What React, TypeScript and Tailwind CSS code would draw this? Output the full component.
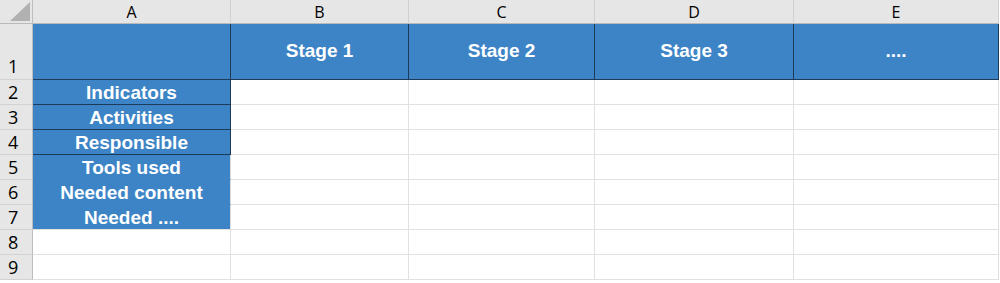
import React from 'react';

const columns = ['A', 'B', 'C', 'D', 'E'];
const stages = ['Stage 1', 'Stage 2', 'Stage 3', '....'];
const labels = ['Indicators', 'Activities', 'Responsible', 'Tools used', 'Needed content', 'Needed ....'];

const headFont = { fontFamily: '"Open Sans", "Noto Sans", sans-serif' };
const cellFont = { fontFamily: '"Liberation Sans", Arial, sans-serif' };

const RowHead: React.FC<{ n: number; bottom?: boolean }> = ({ n, bottom }) => (
  <div
    className={`bg-[#e6e6e6] border-r border-b border-r-[#bdbdbd] border-b-[#d2d2d2] flex pl-[8px] text-[18px] text-black leading-none ${
      bottom ? 'items-end pb-[4px]' : 'items-center'
    }`}
    style={headFont}
  >
    {n}
  </div>
);

export default function App() {
  return (
    <div className="w-[1000px] h-[283px] bg-white overflow-hidden">
      <div className="grid grid-cols-[33px_198px_178px_186px_199px_205px] grid-rows-[24px_56px_repeat(8,25px)]">
        {/* corner */}
        <div className="relative bg-[#e6e6e6] border-r border-b border-r-[#bdbdbd] border-b-[#b9b9b9]">
          <svg className="absolute left-[10px] top-[2px]" width="20" height="19" viewBox="0 0 20 19">
            <polygon points="20,0 20,19 0,19" fill="#b1b1b1" />
          </svg>
        </div>
        {columns.map((c) => (
          <div
            key={c}
            className="bg-[#e6e6e6] border-r border-b border-r-[#d0d0d0] border-b-[#b9b9b9] flex items-center justify-center text-[16px] text-black"
            style={headFont}
          >
            {c}
          </div>
        ))}

        {/* row 1: stage headers */}
        <RowHead n={1} bottom />
        <div className="bg-[#3d84c6] border-r border-b border-[#1d3a58]" />
        {stages.map((s) => (
          <div
            key={s}
            className="bg-[#3d84c6] border-r border-b border-[#1d3a58] flex items-center justify-center text-white font-bold text-[19px]"
            style={cellFont}
          >
            {s}
          </div>
        ))}

        {/* rows 2-7: labels */}
        {labels.map((label, i) => {
          const boxed = i < 3;
          const last = i === labels.length - 1;
          return (
            <React.Fragment key={label}>
              <RowHead n={i + 2} />
              <div
                className={`bg-[#3d84c6] border-r border-b flex items-center justify-center text-white font-bold text-[19px] leading-none ${
                  boxed
                    ? 'border-[#1d3a58]'
                    : last
                      ? 'border-r-[#dcdcdc] border-b-[#e1e1e1]'
                      : 'border-r-[#dcdcdc] border-b-[#3d84c6]'
                }`}
                style={cellFont}
              >
                {label}
              </div>
              {stages.map((s) => (
                <div key={s} className="bg-white border-r border-b border-[#e1e1e1]" />
              ))}
            </React.Fragment>
          );
        })}

        {/* rows 8-9: empty */}
        {[8, 9].map((n) => (
          <React.Fragment key={n}>
            <RowHead n={n} />
            {columns.map((c) => (
              <div key={c} className="bg-white border-r border-b border-[#e1e1e1]" />
            ))}
          </React.Fragment>
        ))}
      </div>
    </div>
  );
}
